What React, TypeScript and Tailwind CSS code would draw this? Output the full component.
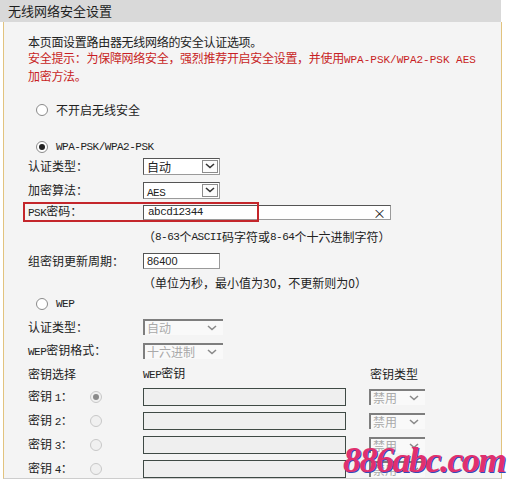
import React from "react";

const Chev = ({ color }: { color: string }) => (
  <svg width="10" height="6" viewBox="0 0 10 6">
    <path d="M1 1l4 3.5L9 1" stroke={color} strokeWidth="1.6" fill="none" />
  </svg>
);

const Radio = ({ on, off }: { on?: boolean; off?: boolean }) => (
  <span
    className={
      "flex h-[12px] w-[12px] items-center justify-center rounded-full border " +
      (off ? "border-[#c8c8c8] bg-[#f0f0f0]" : "border-[#8a8a8a] bg-white")
    }
  >
    {on && <span className={"h-[6px] w-[6px] rounded-full " + (off ? "bg-[#8a8a8a]" : "bg-[#222]")} />}
  </span>
);

const Sel = ({ children }: { children: React.ReactNode }) => (
  <div className="flex h-[17px] w-[77px] border border-[#9a9a9a] border-t-[#555] border-l-[#555] bg-white">
    <span className="flex-1 pl-[3px] text-[12px] leading-[15px]">{children}</span>
    <span className="my-[1px] mr-[1px] flex w-[16px] items-center justify-center border border-[#8c8c8c] bg-[#fcfcfc]">
      <Chev color="#333" />
    </span>
  </div>
);

const DisSel = ({ text, w }: { text: string; w: string }) => (
  <div className={"flex h-[16px] items-center border-t-2 border-l-2 border-[#7e7e7e] bg-[#f9f9f9] " + w}>
    <span className="flex-1 pl-[2px] text-[12px] leading-[14px] text-[#a9a9a9]">{text}</span>
    <span className="mr-[6px]">
      <Chev color="#8a8a8a" />
    </span>
  </div>
);

const mono = "font-['Liberation_Mono','Noto_Sans_CJK_SC',monospace] text-[11px] tracking-[-0.5px]";

export default function App() {
  return (
    <div className="relative h-[483px] w-[513px] overflow-hidden bg-white font-['Noto_Sans_CJK_SC',sans-serif] text-[12px] text-[#222]">
      <div className="h-[22px] w-[501px] bg-[#d9d9d9] pl-[8px] text-[13px] leading-[22px] text-[#1e1e1e]">
        无线网络安全设置
      </div>
      <div className="ml-[3px] h-[457px] w-[499px] border-r border-b border-l border-[#e2c37e] border-b-[#cdcdcd] bg-[#f4f4f4] pl-[24px] pt-[12px]">
        <div className="leading-[16px] tracking-[-0.3px]">
          <div>本页面设置路由器无线网络的安全认证选项。</div>
          <div className="text-[#c81e24]">
            安全提示：为保障网络安全，强烈推荐开启安全设置，并使用
            <span className={mono + " tracking-normal"}>WPA-PSK/WPA2-PSK AES</span>
          </div>
          <div className="text-[#c81e24]">加密方法。</div>
        </div>

        <div className="mt-[14px] flex h-[24px] items-center gap-[8px] pl-[8px]">
          <Radio />
          <span>不开启无线安全</span>
        </div>

        <div className="mt-[18px] flex h-[14px] items-center gap-[8px] pl-[8px]">
          <Radio on />
          <span className={mono}>WPA-PSK/WPA2-PSK</span>
        </div>

        <div className="flex h-[24px] items-center">
          <div className="w-[115px]">认证类型：</div>
          <Sel>自动</Sel>
        </div>
        <div className="flex h-[24px] items-center">
          <div className="w-[115px]">加密算法：</div>
          <Sel>
            <span className={mono}>AES</span>
          </Sel>
        </div>
        <div className="relative flex h-[20px] items-center">
          <div className="absolute top-[0px] left-[-5px] h-[20px] w-[236px] border-2 border-[#c4262b]" />
          <div className="w-[115px]">
            <span className={mono}>PSK</span>密码：
          </div>
          <div className="flex h-[15px] w-[248px] items-center justify-between border border-[#9a9a9a] border-t-[#555] border-l-[#555] bg-white px-[4px]">
            <span className={mono}>abcd12344</span>
            <span className="text-[13px] leading-none">×</span>
          </div>
        </div>
        <div className="mt-[3px] flex h-[24px] items-center pl-[115px]">
          （<span className={mono}>8-63</span>个<span className={mono}>ASCII</span>码字符或
          <span className={mono}>8-64</span>个十六进制字符）
        </div>

        <div className="flex h-[24px] items-center">
          <div className="w-[115px]">组密钥更新周期：</div>
          <div className="flex h-[16px] w-[77px] items-center border border-[#9a9a9a] border-t-[#555] border-l-[#555] bg-white pl-[3px] font-['Liberation_Sans',sans-serif] text-[11px]">
            86400
          </div>
        </div>
        <div className="flex h-[20px] items-center pl-[115px]">（单位为秒，最小值为30，不更新则为0）</div>

        <div className="flex h-[22px] items-center gap-[8px] pl-[8px]">
          <Radio />
          <span className={mono}>WEP</span>
        </div>
        <div className="flex h-[24px] items-center">
          <div className="w-[115px]">认证类型：</div>
          <DisSel text="自动" w="w-[80px]" />
        </div>
        <div className="flex h-[24px] items-center">
          <div className="w-[115px]">
            <span className={mono}>WEP</span>密钥格式：
          </div>
          <DisSel text="十六进制" w="w-[80px]" />
        </div>
        <div className="flex h-[22px] items-center">
          <div className="w-[115px]">密钥选择</div>
          <div className="w-[227px]">
            <span className={mono}>WEP</span>密钥
          </div>
          <div>密钥类型</div>
        </div>

        {[1, 2, 3, 4].map((n) => (
          <div key={n} className="flex h-[24px] items-center">
            <div className="w-[62px]">
              密钥 <span className={mono}>{n}</span>：
            </div>
            <div className="w-[53px]">
              <Radio on={n === 1} off />
            </div>
            <div className="h-[18px] w-[203px] border border-[#3f4a45] bg-[#efefef]" />
            <div className="ml-[23px]">
              <DisSel text="禁用" w="w-[56px]" />
            </div>
          </div>
        ))}
      </div>

      <div className="absolute top-[442px] left-[343px] font-['Liberation_Serif',serif] text-[36px] font-bold italic leading-none tracking-[-1.5px] text-[#e0306e] [text-shadow:1px_1px_0_#3548b8]">
        886abc.com
      </div>
    </div>
  );
}
